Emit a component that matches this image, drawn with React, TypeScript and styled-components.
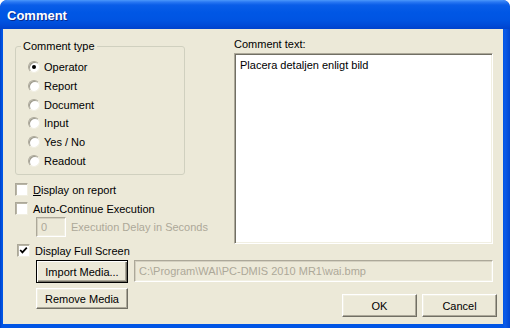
import styled, { createGlobalStyle } from "styled-components"

const GlobalStyle = createGlobalStyle`
    html, body {
        margin: 0;
        padding: 0;
        background: #ffffff;
    }
    body {
        font-family: "Liberation Sans", Arial, sans-serif;
        font-size: 11px;
        color: #000000;
    }
`

const radioOptions = ["Operator", "Report", "Document", "Input", "Yes / No", "Readout"]

const CheckMark = () => (
    <svg width={9} height={9} viewBox="0 0 9 9">
        <polyline points="1.2,4 3.4,6.4 7.8,1.6" fill="none" stroke="#000" strokeWidth={1.7} />
    </svg>
)

type CheckProps = { label: React.ReactNode; checked?: boolean; inset?: number }

const CheckOption = ({ label, checked, inset = 0 }: CheckProps) => (
    <CheckRow $inset={inset}>
        <CheckBox>{checked && <CheckMark />}</CheckBox>
        <span>{label}</span>
    </CheckRow>
)

export default function App() {
    return (
        <>
            <GlobalStyle />
            <Frame>
                <TitleBar>
                    <Title>Comment</Title>
                </TitleBar>
                <Body>
                    <TopRow>
                        <LeftCol>
                            <GroupBox>
                                <Legend>Comment type</Legend>
                                <RadioList>
                                    {radioOptions.map((option, i) => (
                                        <RadioRow key={option}>
                                            <Radio $selected={i === 0} />
                                            <span>{option}</span>
                                        </RadioRow>
                                    ))}
                                </RadioList>
                            </GroupBox>
                            <CheckList>
                                <CheckOption
                                    label={
                                        <>
                                            <u>D</u>isplay on report
                                        </>
                                    }
                                />
                                <CheckOption label="Auto-Continue Execution" />
                            </CheckList>
                            <DelayRow>
                                <DisabledEdit $width={30} $height={20}>
                                    0
                                </DisabledEdit>
                                <DisabledText>Execution Delay in Seconds</DisabledText>
                            </DelayRow>
                            <FullScreenRow>
                                <CheckOption label="Display Full Screen" checked inset={2} />
                            </FullScreenRow>
                        </LeftCol>
                        <RightCol>
                            <FieldLabel>Comment text:</FieldLabel>
                            <TextBox>Placera detaljen enligt bild</TextBox>
                        </RightCol>
                    </TopRow>
                    <MediaRow>
                        <PushButton $width={92} $height={23} $default>
                            Import Media...
                        </PushButton>
                        <DisabledEdit $width={359} $height={22}>
                            C:\Program\WAI\PC-DMIS 2010 MR1\wai.bmp
                        </DisabledEdit>
                    </MediaRow>
                    <BottomRow>
                        <PushButton $width={92} $height={21}>
                            Remove Media
                        </PushButton>
                        <DialogButtons>
                            <PushButton $width={75} $height={23}>
                                OK
                            </PushButton>
                            <PushButton $width={75} $height={23}>
                                Cancel
                            </PushButton>
                        </DialogButtons>
                    </BottomRow>
                </Body>
            </Frame>
        </>
    )
}

const Frame = styled.div`
    width: 510px;
    height: 328px;
    box-sizing: border-box;
    display: flex;
    flex-direction: column;
    padding: 0 7px 4px 3px;
    background: linear-gradient(90deg, #0040c8 0px, #0055e5 2px, #0055e5 503px, #0a5ae8 505px, #0046d0 510px);
    border-radius: 7px 7px 0 0;
    overflow: hidden;
`

const TitleBar = styled.div`
    height: 29px;
    flex: none;
    display: flex;
    align-items: center;
    margin: 0 -7px 0 -3px;
    padding-left: 7px;
    border-radius: 7px 7px 0 0;
    background: linear-gradient(
        180deg,
        #4c98fb 0px,
        #2a78f3 2px,
        #0a5de8 5px,
        #0057e5 12px,
        #0054e2 20px,
        #004bd8 25px,
        #0042cc 29px
    );
`

const Title = styled.span`
    font-family: "Liberation Sans", Arial, sans-serif;
    font-weight: bold;
    font-size: 13px;
    color: #ffffff;
    text-shadow: 1px 1px 0 #0a2a8c;
    margin-top: 1px;
`

const Body = styled.div`
    flex: 1;
    background: #ece9d8;
    display: flex;
    flex-direction: column;
    padding: 11px 0 0 12px;
`

const TopRow = styled.div`
    display: flex;
    align-items: flex-start;
`

const LeftCol = styled.div`
    width: 170px;
    display: flex;
    flex-direction: column;
`

const RightCol = styled.div`
    margin-left: 49px;
    width: 259px;
    display: flex;
    flex-direction: column;
`

const GroupBox = styled.fieldset`
    margin: 0;
    min-width: 0;
    width: 170px;
    box-sizing: border-box;
    padding: 5px 0 4px 0;
    border: 1px solid #d0d0bf;
    border-radius: 3px;
`

const Legend = styled.legend`
    padding: 0 2px;
    margin-left: 5px;
    line-height: 13px;
    color: #000;
`

const RadioList = styled.div`
    padding-left: 12px;
`

const RadioRow = styled.div`
    height: 18.7px;
    display: flex;
    align-items: center;
`

const Radio = styled.span<{ $selected?: boolean }>`
    width: 12px;
    height: 12px;
    box-sizing: border-box;
    border-radius: 50%;
    margin-right: 4px;
    background: #ffffff;
    border: 1px solid;
    border-color: #aca899 #f1efe2 #f1efe2 #aca899;
    box-shadow: inset 1px 1px 0 #9d9a8c;
    display: flex;
    align-items: center;
    justify-content: center;

    &::after {
        content: "";
        width: 4px;
        height: 4px;
        border-radius: 50%;
        background: #000;
        display: ${p => (p.$selected ? "block" : "none")};
    }
`

const CheckList = styled.div`
    margin-top: 6px;
    display: flex;
    flex-direction: column;
    gap: 2px;
`

const CheckRow = styled.div<{ $inset: number }>`
    height: 17px;
    display: flex;
    align-items: center;
    white-space: nowrap;
    padding-left: ${p => p.$inset}px;
`

const CheckBox = styled.span`
    width: 13px;
    height: 13px;
    box-sizing: border-box;
    flex: none;
    margin-right: 5px;
    background: #ffffff;
    border: 1px solid;
    border-color: #aca899 #f1efe2 #f1efe2 #aca899;
    box-shadow: inset 1px 1px 0 #b8b5a6;
    display: flex;
    align-items: center;
    justify-content: center;
`

const DelayRow = styled.div`
    display: flex;
    align-items: center;
    padding-left: 21px;
    white-space: nowrap;
`

const DisabledText = styled.span`
    color: #aca899;
    margin-left: 5px;
`

const DisabledEdit = styled.div<{ $width: number; $height: number }>`
    width: ${p => p.$width}px;
    height: ${p => p.$height}px;
    box-sizing: border-box;
    flex: none;
    display: flex;
    align-items: center;
    padding-left: 4px;
    color: #aca899;
    background: #ece9d8;
    border: 1px solid;
    border-color: #aca899 #ffffff #ffffff #aca899;
    box-shadow: inset 1px 1px 0 #d4d0c0, inset -1px -1px 0 #f1efe2;
    white-space: nowrap;
    overflow: hidden;
`

const FullScreenRow = styled.div`
    margin-top: 5px;
`

const FieldLabel = styled.span`
    line-height: 13px;
    margin-top: -2px;
    margin-bottom: 2px;
`

const TextBox = styled.div`
    height: 191px;
    box-sizing: border-box;
    background: #ffffff;
    border: 1px solid;
    border-color: #aca899 #ffffff #ffffff #aca899;
    box-shadow: inset 1px 1px 0 #716f64, inset -1px -1px 0 #f1efe2;
    padding: 5px 5px;
`

const MediaRow = styled.div`
    margin-top: 1px;
    display: flex;
    align-items: flex-start;
    gap: 6px;
    padding-left: 21px;
`

const BottomRow = styled.div`
    margin-top: 5px;
    display: flex;
    align-items: flex-start;
    padding: 0 6px 0 21px;
`

const DialogButtons = styled.div`
    margin-left: auto;
    margin-top: 6px;
    display: flex;
    gap: 5px;
`

const PushButton = styled.button<{ $width: number; $height: number; $default?: boolean }>`
    width: ${p => p.$width}px;
    height: ${p => p.$height}px;
    box-sizing: border-box;
    padding: 0;
    margin: 0;
    font-family: "Liberation Sans", Arial, sans-serif;
    font-size: 11px;
    color: #000;
    background: #ece9d8;
    border: 1px solid;
    border-color: ${p => (p.$default ? "#000 #000 #000 #000" : "#ffffff #716f64 #716f64 #ffffff")};
    box-shadow: ${p =>
        p.$default
            ? "inset 1px 1px 0 #ffffff, inset -1px -1px 0 #716f64, inset -2px -2px 0 #aca899"
            : "inset -1px -1px 0 #aca899, inset 1px 1px 0 #f1efe2"};
`
